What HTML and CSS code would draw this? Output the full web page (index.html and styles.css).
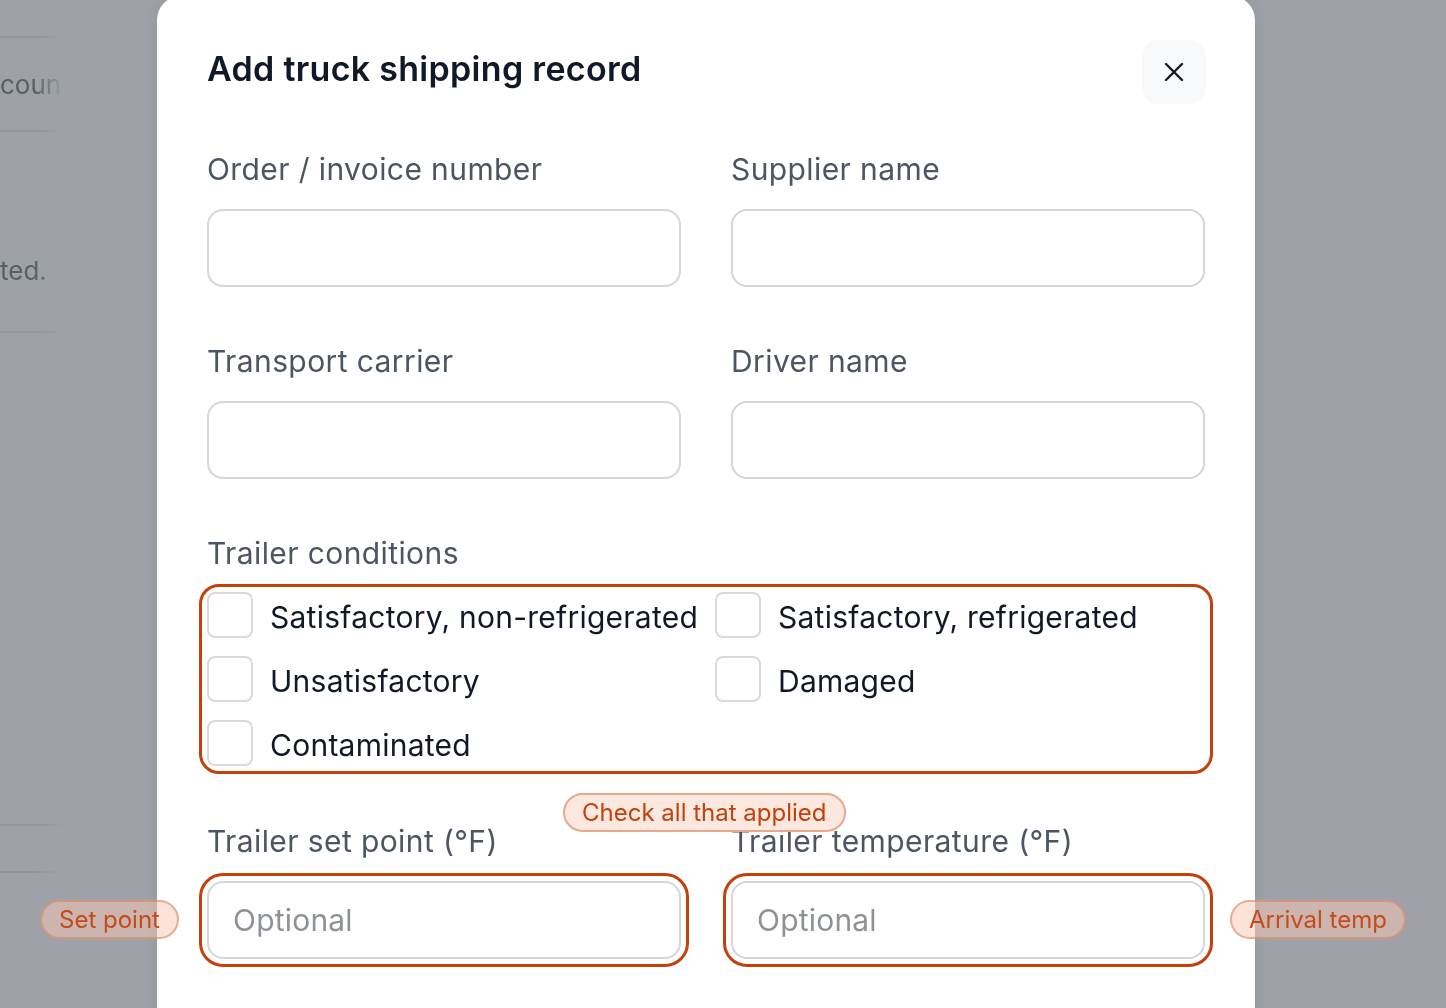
FILE: index.html
```html
<!DOCTYPE html>
<html lang="en">
<head>
  <meta charset="UTF-8">
  <meta name="viewport" content="width=device-width, initial-scale=1.0">
  <title>Add truck shipping record</title>
  <link rel="stylesheet" href="styles.css">
</head>

<body>
  <!-- page underneath the dialog, dimmed by the backdrop -->
  <div class="behind">
    <div class="behind-row row-top"></div>
    <div class="behind-row row-account"><span>coun</span></div>
    <div class="behind-row row-status"><span>ted.</span></div>
    <div class="behind-row row-blank"></div>
    <div class="behind-row row-thin"></div>
    <div class="behind-row row-end"></div>
  </div>

  <div class="modal">
    <div class="modal-header">
      <h2>Add truck shipping record</h2>
      <button class="close-btn" aria-label="Close">
        <svg width="24" height="24" viewBox="0 0 24 24" fill="none" stroke="#111827" stroke-width="2.4" stroke-linecap="round">
          <path d="M4 4 L20 20 M20 4 L4 20"/>
        </svg>
      </button>
    </div>

    <div class="form-grid">
      <div class="field">
        <label>Order / invoice number</label>
        <input type="text">
      </div>
      <div class="field">
        <label>Supplier name</label>
        <input type="text">
      </div>
      <div class="field">
        <label>Transport carrier</label>
        <input type="text">
      </div>
      <div class="field">
        <label>Driver name</label>
        <input type="text">
      </div>
    </div>

    <div class="conditions">
      <label class="section-label">Trailer conditions</label>
      <div class="check-grid marked">
        <label class="check"><span class="box"></span><span class="check-text">Satisfactory, non-refrigerated</span></label>
        <label class="check"><span class="box"></span><span class="check-text">Satisfactory, refrigerated</span></label>
        <label class="check"><span class="box"></span><span class="check-text">Unsatisfactory</span></label>
        <label class="check"><span class="box"></span><span class="check-text">Damaged</span></label>
        <label class="check"><span class="box"></span><span class="check-text">Contaminated</span></label>
      </div>
      <span class="note note-center">Check all that applied</span>
    </div>

    <div class="form-grid temps">
      <div class="field">
        <label>Trailer set point (°F)</label>
        <input type="text" class="marked" placeholder="Optional">
      </div>
      <div class="field">
        <label>Trailer temperature (°F)</label>
        <input type="text" class="marked" placeholder="Optional">
      </div>
    </div>
  </div>

  <span class="note note-faded note-left">Set point</span>
  <span class="note note-faded note-right">Arrival temp</span>
</body>
</html>
```

FILE: styles.css
```css
body {
  margin: 0;
  height: 100vh;
  overflow: hidden;
  background-color: #9fa1a8;
  font-family: Inter, "Noto Sans", sans-serif;
  color: #111827;
}

/* dimmed page behind the dialog */
.behind {
  width: 64px;
  -webkit-mask-image: linear-gradient(to right, #000 55%, transparent 100%);
  mask-image: linear-gradient(to right, #000 55%, transparent 100%);
}
.behind-row {
  border-bottom: 2px solid #93959c;
  font-size: 26px;
  color: #5a5e66;
  box-sizing: border-box;
}
.behind-row span {
  display: block;
}
.row-top { height: 38px; }
.row-account { height: 94px; padding-top: 31px; }
.row-status { height: 201px; padding-top: 123px; }
.row-blank { height: 493px; }
.row-thin { height: 47px; }
.row-end { height: 100px; border-bottom: none; }

/* dialog */
.modal {
  position: fixed;
  top: -4px;
  left: 157px;
  width: 998px;
  height: 1100px;
  padding: 44px 50px;
  background: #fff;
  border-radius: 24px;
  box-shadow: 0 0 14px rgba(0, 0, 0, 0.08);
}
.modal-header {
  display: flex;
  justify-content: space-between;
  align-items: flex-start;
  margin-bottom: 47px;
}
.modal-header h2 {
  margin: 0;
  margin-top: 8px;
  font-size: 34px;
  font-weight: 600;
  letter-spacing: 0.3px;
  color: #111827;
}
.close-btn {
  width: 64px;
  height: 64px;
  margin-right: -1px;
  border: none;
  border-radius: 16px;
  background: #f8f9fb;
  display: flex;
  align-items: center;
  justify-content: center;
  cursor: pointer;
}

.form-grid {
  display: grid;
  grid-template-columns: 1fr 1fr;
  column-gap: 50px;
  row-gap: 56px;
}
.field label,
.section-label {
  display: block;
  font-size: 30px;
  line-height: 36px;
  letter-spacing: 0.4px;
  color: #4b5563;
}
.field label {
  margin-bottom: 22px;
}
.field input {
  display: block;
  width: 100%;
  height: 78px;
  box-sizing: border-box;
  border: 2px solid #d4d6db;
  border-radius: 16px;
  padding: 0 24px;
  font-family: inherit;
  font-size: 30px;
  letter-spacing: 0.2px;
  color: #111827;
  background: #fff;
}
.field input::placeholder {
  color: #8e9199;
}

.conditions {
  position: relative;
  margin-top: 56px;
}
.section-label {
  margin-bottom: 21px;
}
.check-grid {
  display: grid;
  grid-template-columns: 490px 1fr;
  column-gap: 18px;
  row-gap: 18px;
}
.check {
  display: flex;
  align-items: center;
  height: 46px;
  gap: 17px;
  font-size: 30px;
  letter-spacing: 0.25px;
  white-space: nowrap;
  color: #111827;
}
/* text sits a touch below the box centre */
.check-text {
  line-height: 40px;
  padding-top: 4px;
}
.check .box {
  width: 46px;
  height: 46px;
  box-sizing: border-box;
  border: 2px solid #d8dadf;
  border-radius: 8px;
  flex-shrink: 0;
}

.temps {
  margin-top: 57px;
}

/* review highlights */
.marked {
  outline: 3px solid #c2410c;
  outline-offset: 5px;
  border-radius: 12px;
}
.field input.marked {
  border-radius: 16px;
}

.note {
  position: absolute;
  box-sizing: border-box;
  height: 39px;
  padding: 0 17px;
  border-radius: 20px;
  border: 2px solid #e6a98f;
  background: #fde8df;
  color: #c2410c;
  font-size: 24px;
  line-height: 35px;
  white-space: nowrap;
}
.note-center {
  left: 356px;
  top: 258px;
}
.note-faded {
  background: rgba(250, 200, 182, 0.5);
  border-color: rgba(214, 120, 85, 0.5);
  color: #c64b1a;
}
.note-left {
  left: 40px;
  top: 900px;
}
.note-right {
  left: 1230px;
  top: 900px;
}
```
